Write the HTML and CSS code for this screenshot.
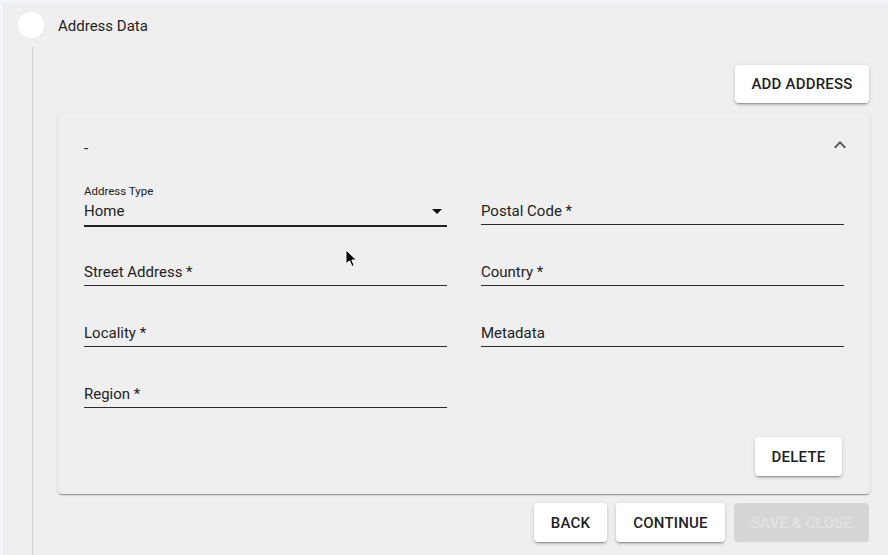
FILE: index.html
```html
<!DOCTYPE html>
<html lang="en">
<head>
<meta charset="utf-8">
<title>Address Data</title>
<link rel="stylesheet" href="styles.css">
</head>
<body>
<div class="panel">
  <div class="step-header">
    <span class="step-dot"></span>
    <span class="step-title">Address Data</span>
  </div>
  <div class="step-body">
    <div class="top-actions">
      <button class="btn">Add Address</button>
    </div>
    <div class="card">
      <div class="card-header">
        <span class="card-title">-</span>
        <svg class="chevron" viewBox="0 0 24 24" width="24" height="24"><path d="M12 8l-6 6 1.41 1.41L12 10.83l4.59 4.58L18 14z"/></svg>
      </div>
      <div class="fields">
        <div class="field select">
          <span class="field-label">Address Type</span>
          <div class="field-input">
            <span>Home</span>
            <svg class="drop" viewBox="0 2 24 20" width="24" height="20"><path d="M7 10l5 5 5-5z"/></svg>
          </div>
        </div>
        <div class="field"><div class="field-input"><span>Postal Code *</span></div></div>
        <div class="field"><div class="field-input"><span>Street Address *</span></div></div>
        <div class="field"><div class="field-input"><span>Country *</span></div></div>
        <div class="field"><div class="field-input"><span>Locality *</span></div></div>
        <div class="field"><div class="field-input"><span>Metadata</span></div></div>
        <div class="field"><div class="field-input"><span>Region *</span></div></div>
      </div>
      <div class="card-actions">
        <button class="btn btn-delete">Delete</button>
      </div>
    </div>
    <div class="bottom-actions">
      <button class="btn btn-back">Back</button>
      <button class="btn btn-continue">Continue</button>
      <button class="btn btn-save" disabled>Save &amp; Close</button>
    </div>
  </div>
  <svg class="cursor" viewBox="0 0 13 19" width="13" height="19"><path d="M1 1 L1 15 L4.5 11.8 L7 17.5 L9.2 16.5 L6.8 11 L11.5 11 Z" fill="#000" stroke="#fff" stroke-width="1"/></svg>
</div>
</body>
</html>
```
FILE: styles.css
```css
* { box-sizing: border-box; }
html, body { margin: 0; padding: 0; }
body {
  background: #f4f5f8;
  font-family: Roboto, "Noto Sans", "Liberation Sans", sans-serif;
  color: #222;
  width: 888px;
  height: 555px;
  overflow: hidden;
  padding: 3px 0 0 3px;
}
.panel {
  position: relative;
  background: #efefef;
  height: 552px;
  width: 885px;
}
.step-header {
  display: flex;
  align-items: center;
  height: 35px;
  padding: 9px 0 0 15px;
}
.step-dot {
  width: 26px;
  height: 26px;
  border-radius: 50%;
  background: #fff;
  flex: none;
}
.step-title {
  margin-left: 14px;
  font-size: 15px;
  color: #222;
  margin-top: 1px;
}
.step-body {
  margin: 9px 0 0 29px;
  border-left: 1px solid #cfcfcf;
  padding: 18px 18px 13px 25px;
  height: 508px;
}
.top-actions {
  display: flex;
  justify-content: flex-end;
  margin-bottom: 10px;
  padding-right: 1px;
}
.btn {
  font-family: Roboto, "Noto Sans", "Liberation Sans", sans-serif;
  font-size: 15px;
  font-weight: 500;
  letter-spacing: 0.2px;
  text-transform: uppercase;
  color: #222;
  background: #fff;
  border: none;
  border-radius: 4px;
  height: 38px;
  padding: 0 8px;
  box-shadow: 0 3px 1px -2px rgba(0,0,0,.2), 0 2px 2px 0 rgba(0,0,0,.14), 0 1px 5px 0 rgba(0,0,0,.12);
}
.top-actions .btn { width: 134px; }
.card {
  background: #efefef;
  border-radius: 4px;
  box-shadow: 0 2px 1px -1px rgba(0,0,0,.2), 0 1px 1px 0 rgba(0,0,0,.14), 0 1px 3px 0 rgba(0,0,0,.12);
  padding: 0 26px 18px 26px;
  height: 381px;
}
.card-header {
  display: flex;
  align-items: center;
  justify-content: space-between;
  height: 64px;
}
.card-title {
  font-size: 15px;
  margin-top: 6px;
}
.chevron {
  fill: #595959;
  margin-right: -8px;
}
.fields {
  display: grid;
  grid-template-columns: 363px 363px;
  column-gap: 34px;
  row-gap: 20px;
  grid-auto-rows: 41px;
  margin-top: 7px;
}
.field {
  display: flex;
  flex-direction: column;
  justify-content: flex-end;
}
.field-label {
  font-size: 11.5px;
  line-height: 14px;
  margin-bottom: 3px;
  color: #222;
}
.field-input {
  display: flex;
  align-items: center;
  justify-content: space-between;
  font-size: 15px;
  line-height: 20px;
  padding-bottom: 3px;
  border-bottom: 1px solid #2a2a2a;
}
.select .field-input {
  border-bottom: 2px solid #222;
  padding-bottom: 4px;
  margin-bottom: -2px;
}
.drop {
  fill: #111;
  margin-right: -2px;
}
.card-actions {
  display: flex;
  justify-content: flex-end;
  margin-top: 29px;
  padding-right: 2px;
}
.btn-delete { width: 87px; height: 39px; }
.bottom-actions {
  display: flex;
  justify-content: flex-end;
  gap: 9px;
  margin-top: 9px;
  padding-right: 1px;
}
.bottom-actions .btn { height: 39px; }
.btn-back { width: 73px; }
.btn-continue { width: 109px; }
.btn-save {
  width: 135px;
  background: #d6d6d6;
  color: #e2e2e2;
  box-shadow: none;
}
.cursor {
  position: absolute;
  left: 342px;
  top: 246px;
}
```
